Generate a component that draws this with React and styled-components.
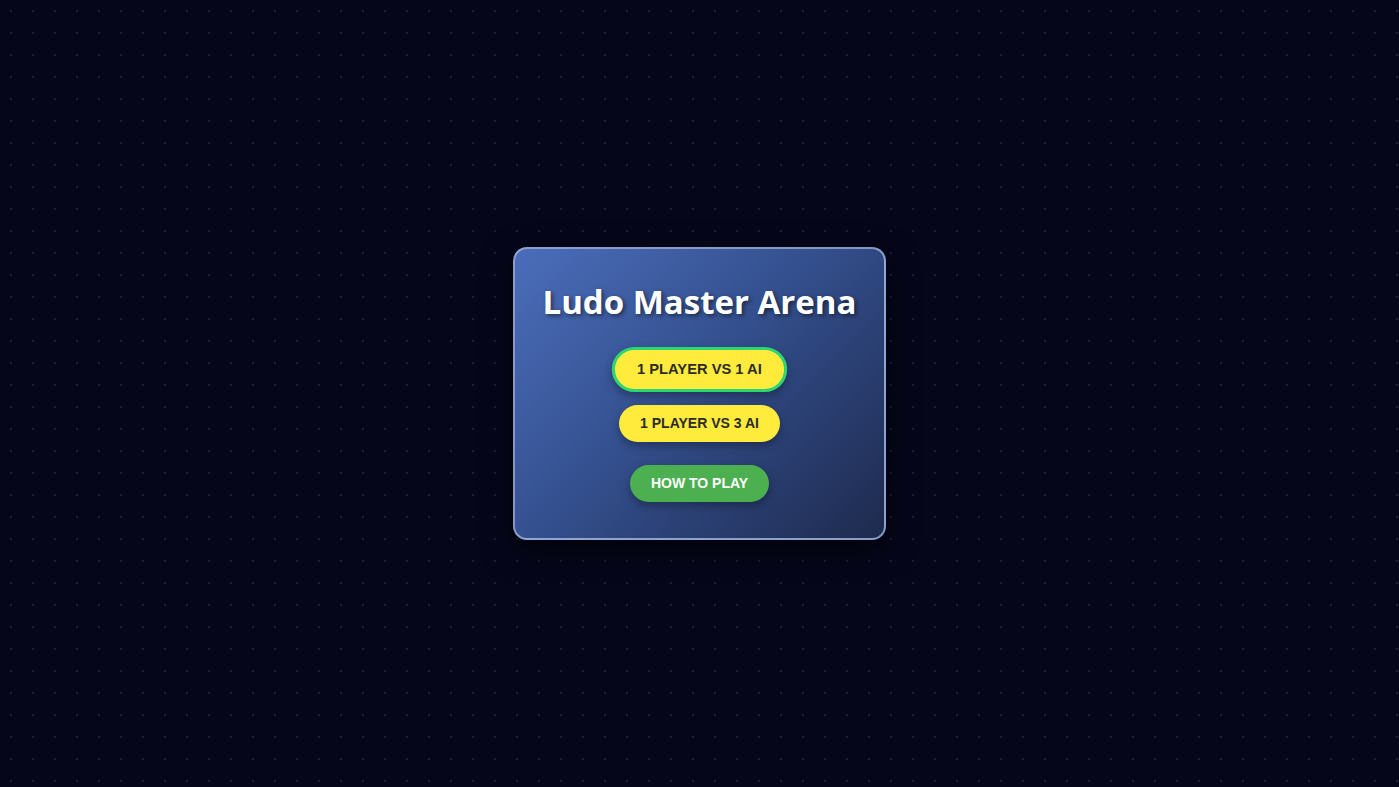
import React from "react";
import styled, { createGlobalStyle } from "styled-components";

const GlobalStyle = createGlobalStyle`
  html, body {
    margin: 0;
    padding: 0;
  }
  body {
    background-color: #05061a;
    background-image: radial-gradient(circle, rgba(120, 130, 170, 0.2) 1px, transparent 1.6px);
    background-size: 22px 22px;
    background-position: 0 0;
    font-family: "Liberation Sans", Arial, sans-serif;
  }
`;

const Page = styled.div`
  height: 100vh;
  display: flex;
  align-items: center;
  justify-content: center;
`;

const Card = styled.div`
  box-sizing: border-box;
  width: 373px;
  height: 293px;
  padding: 30px 20px;
  border: 2px solid rgba(170, 185, 225, 0.75);
  border-radius: 14px;
  background: linear-gradient(135deg, #4b6dba 0%, #34508f 45%, #1e2a4e 100%);
  box-shadow: 0 10px 30px rgba(0, 0, 0, 0.6);
  display: flex;
  flex-direction: column;
  align-items: center;
`;

const Title = styled.h1`
  margin: 0 0 23px;
  font-family: "Open Sans", "Noto Sans", sans-serif;
  font-weight: 700;
  font-size: 33px;
  line-height: 46px;
  color: #ffffff;
  text-shadow: 2px 2px 4px rgba(0, 0, 0, 0.5);
`;

const Menu = styled.div`
  display: flex;
  flex-direction: column;
  align-items: center;
  gap: 14px;
`;

const Button = styled.button`
  box-sizing: border-box;
  padding: 10px 21px;
  border: ${(p) => (p.$active ? "3px solid #2ed573" : "none")};
  border-radius: 25px;
  font-family: "Liberation Sans", Arial, sans-serif;
  font-weight: 700;
  font-size: 14px;
  line-height: 17px;
  text-transform: uppercase;
  color: ${(p) => (p.$green ? "#ffffff" : "#2b2b2b")};
  background: ${(p) => (p.$green ? "#4caf50" : "#ffeb3b")};
  box-shadow: 0 4px 8px rgba(0, 0, 0, 0.3);
  transform: ${(p) => (p.$active ? "scale(1.05)" : "none")};
  margin-top: ${(p) => (p.$green ? "9px" : "0")};
  cursor: pointer;
`;

export default function App() {
  return (
    <>
      <GlobalStyle />
      <Page>
        <Card>
          <Title>Ludo Master Arena</Title>
          <Menu>
            <Button $active>1 Player vs 1 AI</Button>
            <Button>1 Player vs 3 AI</Button>
            <Button $green>How to Play</Button>
          </Menu>
        </Card>
      </Page>
    </>
  );
}
